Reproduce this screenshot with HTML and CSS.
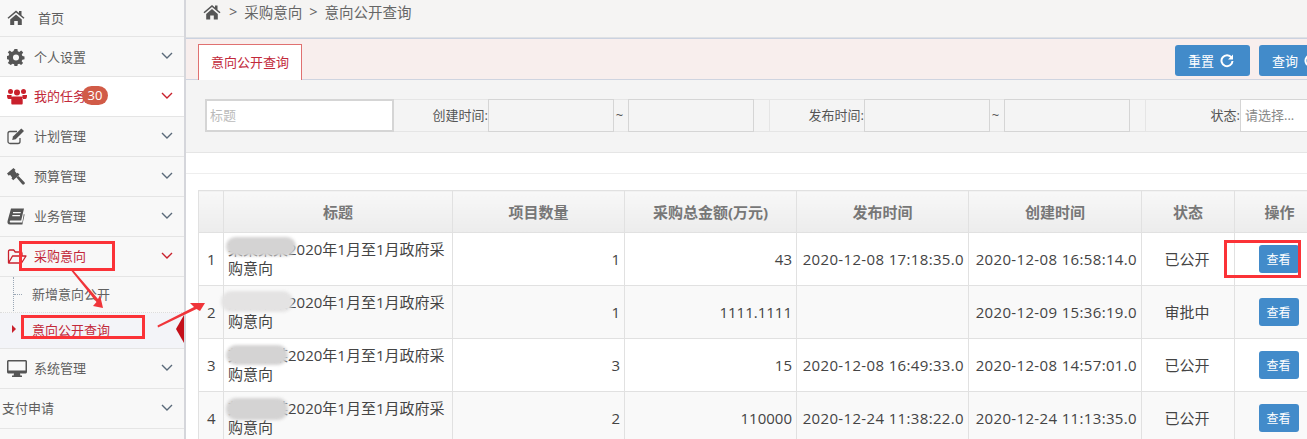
FILE: index.html
```html
<!DOCTYPE html>
<html lang="zh-CN">
<head>
<meta charset="utf-8">
<title>意向公开查询</title>
<link rel="stylesheet" href="styles.css">
</head>
<body>
<div class="page">
  <aside class="side">
    <a class="nav first"><svg class="ic" viewBox="0 0 18 16"><path d="M9 1 0.5 8.200l1 1.100L9 3l7.500 6.300 1-1.100L14.500 5.700V1.500H12v2.100z M3.200 10 9 5l5.800 5v5.500h-4v-4H7.200v4h-4z" fill="#555"/></svg><span class="t t-home">首页</span></a>
    <a class="nav low"><svg class="ic" viewBox="0 0 18 18"><path fill-rule="evenodd" d="M7.500 0h3l.4 2.500 1.600.7 2-1.500 2.100 2.100-1.500 2 .7 1.700 2.200.4v3l-2.300.4-.7 1.600 1.500 2-2.100 2.100-2-1.500-1.600.7-.4 2.300h-3l-.4-2.300-1.600-.7-2 1.500L.3 14.700l1.500-2-.7-1.600L-1 10.700V7.500l2.100-.4.7-1.700-1.500-2L2.400 1.700l2 1.500 1.700-.7z M9 5.800a3.200 3.200 0 1 0 0 6.400 3.200 3.200 0 0 0 0-6.400z" fill="#555"/></svg><span class="t">个人设置</span><svg class="chev" viewBox="0 0 12 8"><path d="M1 1l5 5 5-5" /></svg></a>
    <a class="nav on"><svg class="ic wide" viewBox="0 0 20 16"><g fill="#c9202c"><circle cx="3.500" cy="3" r="2.500"/><circle cx="16.500" cy="3" r="2.500"/><circle cx="10" cy="4" r="3"/><path d="M0 6.500h4.500L5 10.500H1.500C.5 10.500 0 9 0 6.500z M20 6.500h-4.500L15 10.500h3.500c1 0 1.500-1.500 1.500-3.500z M5.500 8h9c.8 0 1.200 1 1.200 4v3c0 .5-.5 1-1 1H5.300c-.5 0-1-.5-1-1v-3c0-3 .4-4 1.200-4z"/></g></svg><span class="t">我的任务</span><span class="badge">30</span><svg class="chev" viewBox="0 0 12 8"><path d="M1 1l5 5 5-5" /></svg></a>
    <a class="nav"><svg class="ic" viewBox="0 0 18 16"><path d="M13 9.500v3.500a2 2 0 0 1-2 2H3a2 2 0 0 1-2-2V5a2 2 0 0 1 2-2h7" fill="none" stroke="#555" stroke-width="1.300"/><path d="M6 8l-.8 3.500 3.500-.8L17 2.500 14.300 0z" fill="#555"/></svg><span class="t">计划管理</span><svg class="chev" viewBox="0 0 12 8"><path d="M1 1l5 5 5-5" /></svg></a>
    <a class="nav"><svg class="ic" viewBox="0 0 18 17"><path d="M6.500 0 0 5.500l1.800 2.200L3 6.800l2.200 2.600-.8.800 1.800 2 6.300-5.500-1.800-2-.9.700L7.600 2.800l1-.9z M9.500 9.500 15 16a1.300 1.300 0 0 0 2.500-1.800L11.500 8z" fill="#555"/></svg><span class="t">预算管理</span><svg class="chev" viewBox="0 0 12 8"><path d="M1 1l5 5 5-5" /></svg></a>
    <a class="nav"><svg class="ic" viewBox="0 0 18 16"><path d="M4 0h13l-2.800 12H3.500c-1 0-1 2 0 2h11.800l1.500-8.500.8.500-2.200 10H3C.6 16 0 14 .7 12z M6 3.500v1.300h7.500l.3-1.300z M5.300 6.500v1.300h7.500l.3-1.300z" fill="#555"/></svg><span class="t">业务管理</span><svg class="chev" viewBox="0 0 12 8"><path d="M1 1l5 5 5-5" /></svg></a>
    <a class="nav open"><svg class="ic wide" viewBox="0 0 20 15"><path d="M1.500 14V2.300C1.500 1.500 2 1 2.700 1h4l1.500 2h5.600c.7 0 1.200.5 1.200 1.200V6.500M1.600 14H14.500L19 7H5.500z" fill="none" stroke="#c9202c" stroke-width="1.300" stroke-linejoin="round"/></svg><span class="t">采购意向</span><svg class="chev" viewBox="0 0 12 8"><path d="M1 1l5 5 5-5" /></svg></a>
    <div class="sub">
      <a class="subitem">新增意向公开</a>
      <a class="subitem cur">意向公开查询<i class="caret"></i></a>
    </div>
    <a class="nav sys"><svg class="ic wide" viewBox="0 0 20 17"><path d="M1.500 0h17c.8 0 1.500.7 1.500 1.500v10.500c0 .8-.7 1.500-1.500 1.500H13l.4 2H15v1.500H5V15.500h1.600l.4-2H1.500C.7 13.500 0 12.800 0 12V1.500C0 .7.700 0 1.500 0z M1.500 1.500V10.500h17V1.500z" fill="#555" fill-rule="evenodd"/></svg><span class="t">系统管理</span><svg class="chev" viewBox="0 0 12 8"><path d="M1 1l5 5 5-5" /></svg></a>
    <a class="nav plain"><span class="t">支付申请</span><svg class="chev" viewBox="0 0 12 8"><path d="M1 1l5 5 5-5" /></svg></a>
  </aside>
  <main class="main">
    <div class="crumb"><svg class="crumb-home" viewBox="0 0 18 16"><path d="M9 1 0.500 8.200l1 1.100L9 3l7.500 6.300 1-1.100L14.500 5.700V1.500H12v2.100z M3.200 10 9 5l5.800 5v5.500h-4v-4H7.200v4h-4z" fill="#555"/></svg><span>&gt;</span><span>采购意向</span><span>&gt;</span><span>意向公开查询</span></div>
    <div class="tabbar">
      <div class="tab">意向公开查询</div>
      <div class="btns">
        <button class="btn">重置<svg class="ref" viewBox="0 0 14 14"><path d="M11.500 3.500A5.500 5.500 0 1 0 12.500 7" fill="none" stroke="#fff" stroke-width="2"/><path d="M13 0.500v5H8z" fill="#fff"/></svg></button>
        <button class="btn">查询<svg class="ref" viewBox="0 0 14 14"><path d="M11.500 3.500A5.500 5.500 0 1 0 12.500 7" fill="none" stroke="#fff" stroke-width="2"/><path d="M13 0.500v5H8z" fill="#fff"/></svg></button>
      </div>
    </div>
    <div class="filters">
      <div class="ftitle"><span class="ph">标题</span></div>
      <label class="flab">创建时间:</label>
      <div class="date"></div><span class="tilde">~</span><div class="date"></div>
      <div class="gap"></div>
      <label class="flab">发布时间:</label>
      <div class="date"></div><span class="tilde">~</span><div class="date"></div>
      <div class="gap"></div>
      <label class="flab">状态:</label>
      <div class="fsel"><span class="ph2">请选择...</span></div>
    </div>
    <div class="band"></div>
    <div class="tablewrap">
      <table class="grid">
        <colgroup><col class="c0"><col class="c1"><col class="c2"><col class="c3"><col class="c4"><col class="c5"><col class="c6"><col class="c7"></colgroup>
        <thead><tr><th></th><th>标题</th><th>项目数量</th><th>采购总金额(万元)</th><th>发布时间</th><th>创建时间</th><th>状态</th><th>操作</th></tr></thead>
        <tbody>
          <tr><td class="n">1</td><td>某某某某2020年1月至1月政府采购意向</td><td class="r">1</td><td class="r">43</td><td class="dt">2020-12-08 17:18:35.0</td><td class="dt">2020-12-08 16:58:14.0</td><td class="c">已公开</td><td class="op"><button class="view">查看</button></td></tr>
          <tr class="alt"><td class="n">2</td><td>某某某某2020年1月至1月政府采购意向</td><td class="r">1</td><td class="r">1111.1111</td><td class="dt"></td><td class="dt">2020-12-09 15:36:19.0</td><td class="c">审批中</td><td class="op"><button class="view">查看</button></td></tr>
          <tr><td class="n">3</td><td>某某某某2020年1月至1月政府采购意向</td><td class="r">3</td><td class="r">15</td><td class="dt">2020-12-08 16:49:33.0</td><td class="dt">2020-12-08 14:57:01.0</td><td class="c">已公开</td><td class="op"><button class="view">查看</button></td></tr>
          <tr class="alt"><td class="n">4</td><td>某某某某2020年1月至1月政府采购意向</td><td class="r">2</td><td class="r">110000</td><td class="dt">2020-12-24 11:38:22.0</td><td class="dt">2020-12-24 11:13:35.0</td><td class="c">已公开</td><td class="op"><button class="view">查看</button></td></tr>
        </tbody>
      </table>
    </div>
  </main>
  <div class="smudge s1"></div>
  <div class="smudge s2"></div>
  <div class="smudge s3"></div>
  <div class="smudge s4"></div>
  <svg class="notes" viewBox="0 0 1307 439">
    <g fill="none" stroke="#fb3237" stroke-width="3">
      <rect x="20.500" y="242.500" width="93" height="27"/>
      <rect x="22.500" y="316.500" width="121" height="21"/>
      <rect x="1225.500" y="241.500" width="74" height="35"/>
    </g>
    <g fill="#f0353a">
      <path d="M71.500 271 73 270 98 299 100 295 103 308 93 306 96.500 302z"/>
      <path d="M158 327.500 157.500 325.500 194 307 190 303 205 303 200 311 196.500 309z"/>
    </g>
  </svg>
</div>
</body>
</html>
```
FILE: styles.css
```css
* { box-sizing: border-box; }
html, body { margin: 0; padding: 0; height: 100%; overflow: hidden; background: #fff; }
body { font-family: "Open Sans", "Noto Sans CJK SC", sans-serif; font-size: 13px; color: #555; }
.page { position: relative; display: flex; width: 1307px; height: 439px; overflow: hidden; }

.side { width: 186px; flex: none; background: #f8f8f8; border-right: 2px solid #d5d6db; }
.nav { display: flex; align-items: center; height: 40px; border-bottom: 1px solid #e5e5e5; padding: 0 0 1px 7px; color: #5f5f5f; position: relative; }
.nav.first { height: 37px; padding-bottom: 1px; }
.nav.low { padding: 1px 0 0 7px; }
.ic { width: 18px; height: 17px; flex: none; margin-right: 9px; }
.ic.wide { width: 20px; margin-right: 7px; }
.t { font-size: 13px; line-height: 18px; }
.t-home { margin-left: 4px; }
.chev { position: absolute; right: 11px; top: 15px; width: 12px; height: 8px; fill: none; stroke: #5a6a7a; stroke-width: 1.400; }
.nav.on { background: #fff; color: #c2293a; }
.nav.on .chev, .nav.open .chev { stroke: #c9202c; }
.nav.open { color: #c2293a; }
.nav.plain { padding-left: 2px; }
.badge { position: absolute; left: 82px; top: 9px; width: 26px; height: 19px; line-height: 18px; border-radius: 10px; background: #d15b47; color: #fff; text-align: center; font-size: 13px; }

.sub { position: relative; background: #f8f8f8; }
.sub::before { content: ""; position: absolute; left: 13px; top: 0; bottom: 0; border-left: 1px dotted #9aa7b5; }
.subitem { display: block; position: relative; height: 36px; padding-left: 32px; line-height: 34px; font-size: 13px; color: #616161; border-bottom: 1px dotted #ddd; }
.subitem::before { content: ""; position: absolute; left: 14px; top: 17px; width: 8px; border-top: 1px dotted #9aa7b5; }
.subitem.cur { background: #f3f4f8; color: #c2293a; border-bottom: 1px solid #e5e5e5; }
.subitem.cur::before { left: 12px; top: 12px; width: 0; border: 0; border-left: 4px solid #c9202c; border-top: 4px solid transparent; border-bottom: 4px solid transparent; }
.caret { position: absolute; right: 0; top: 2px; width: 8px; height: 28px; background: #c4101a; clip-path: polygon(100% 0, 100% 100%, 0 50%); }

.main { flex: 1; min-width: 0; background: #fff; }
.crumb { display: flex; align-items: center; gap: 7px; height: 38px; background: #f5f4f3; padding: 0 0 14px 17px; font-size: 14.500px; color: #666; border-bottom: 1px solid #dfe1e4; }
.crumb-home { width: 18px; height: 16px; margin-right: 1px; }

.tabbar { display: flex; height: 42px; background: #f8eeed; border-top: 1px solid #cbd2e0; border-bottom: 1px solid #cfd4e0; padding-left: 12px; position: relative; }
.tab { width: 104px; height: 36px; margin-top: 5px; background: #fff; border: 1px solid #e07070; border-bottom: 0; color: #c2293a; font-size: 13px; line-height: 34px; text-align: center; flex: none; }
.btns { position: absolute; left: 989px; top: 6px; display: flex; gap: 9px; }
.btn { width: 75px; height: 31px; flex: none; border: 0; border-radius: 3px; background: #428bca; color: #fff; font: 13px "Open Sans", "Noto Sans CJK SC", sans-serif; padding: 0 0 0 13px; text-align: left; white-space: nowrap; }
.ref { width: 14px; height: 14px; margin-left: 6px; vertical-align: -2px; }

.filters { height: 73px; background: #f4f4f4; border-bottom: 1px solid #e5e5e5; display: flex; padding: 19px 0 0 19px; align-items: flex-start; font-size: 13px; color: #555; }
.ftitle { width: 189px; height: 33px; background: #fff; border: 2px solid #d5d5d5; flex: none; padding: 0 3px; line-height: 29px; }
.ph { color: #bbb; }
.flab { flex: none; width: 94px; height: 33px; line-height: 31px; text-align: right; border-top: 1px solid #e5e5e5; border-bottom: 1px solid #e5e5e5; }
.date { width: 126px; height: 33px; flex: none; background: #f4f4f4; border: 1px solid #d5d5d5; }
.tilde { width: 14px; flex: none; height: 33px; padding-right: 3px; line-height: 31px; text-align: center; border-top: 1px solid #e5e5e5; border-bottom: 1px solid #e5e5e5; }
.gap { width: 16px; flex: none; height: 33px; border: 1px solid #e5e5e5; border-width: 1px 1px 1px 0; }
.fsel { width: 80px; height: 33px; flex: none; background: #fff; border: 1px solid #d5d5d5; padding-left: 4px; line-height: 31px; }
.ph2 { color: #888; }

.band { height: 21px; background: #fff; border-bottom: 1px solid #eee; }
.tablewrap { padding: 16px 0 0 12px; }
.grid { border-collapse: collapse; table-layout: fixed; width: 1126px; font-size: 15px; color: #444; border: 1px solid #e1e1e1; }
.c0 { width: 25px; } .c1 { width: 229px; } .c2 { width: 172px; } .c3 { width: 172px; } .c4 { width: 172px; } .c5 { width: 173px; } .c6 { width: 93px; } .c7 { width: 90px; }
.grid th, .grid td { border: 1px solid #e1e1e1; padding: 0 4px; }
.grid th { height: 42px; background: linear-gradient(#f8f8f8, #ececec); color: #777; font-size: 15px; font-weight: 700; text-align: center; }
.grid td { height: 53px; line-height: 19px; }
.grid .alt td { background: #f9f9f9; }
.grid .n { padding-left: 8px; }
.r { text-align: right; }
.dt { text-align: right; white-space: nowrap; letter-spacing: .35px; }
.grid .c { text-align: center; padding-right: 6px; }
.grid .op { text-align: center; padding-right: 6px; }
.view { width: 40px; height: 28px; border: 0; border-radius: 3px; background: #428bca; color: #fff; font: 12px "Open Sans", "Noto Sans CJK SC", sans-serif; padding: 0; }

.smudge { position: absolute; background: #d4d3d3; filter: blur(1.500px); border-radius: 10px; }
.s1 { left: 226px; top: 237px; width: 70px; height: 19px; }
.s2 { left: 221px; top: 291px; width: 72px; height: 21px; background: #e4e3e3; }
.s3 { left: 226px; top: 345px; width: 62px; height: 20px; }
.s4 { left: 226px; top: 398px; width: 62px; height: 22px; }
.notes { position: absolute; left: 0; top: 0; width: 1307px; height: 439px; pointer-events: none; }
```
